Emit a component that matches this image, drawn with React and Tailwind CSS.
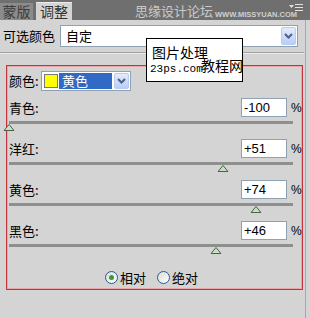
import React from 'react';

const sliders = [
    { label: '青色:', value: '-100', pct: -100 },
    { label: '洋红:', value: '+51', pct: 51 },
    { label: '黄色:', value: '+74', pct: 74 },
    { label: '黑色:', value: '+46', pct: 46 },
];

const cjk = "font-['Noto_Sans_CJK_SC','Noto_Sans',sans-serif]";

const DropButton = ({ className = '' }) => (
    <div className={`flex items-center justify-center rounded-[2px] border border-[#b9cbf3] bg-gradient-to-b from-[#e3ebfd] to-[#b9cdf7] ${className}`}>
        <svg width="9" height="6" viewBox="0 0 9 6">
            <path d="M1 1 L4.5 4.5 L8 1" fill="none" stroke="#4d6185" strokeWidth="2" />
        </svg>
    </div>
);

const Thumb = () => (
    <svg width="11" height="7" viewBox="0 0 11 7">
        <path d="M5.5 0.5 L10.5 6.5 L0.5 6.5 Z" fill="#c2e3bd" stroke="#4f5f4f" strokeWidth="1" />
    </svg>
);

const SliderBlock = ({ label, value, pct }) => (
    <div className="flex flex-col h-[41px]">
        <div className="flex items-center h-[19px]">
            <span className={`${cjk} text-[13px] text-black flex-1 leading-none`}>{label}</span>
            <div className="w-[46px] h-[19px] bg-white border border-[#8ea2b4] flex items-center pl-[2px] font-['Liberation_Sans',sans-serif] text-[13px] text-black">
                {value}
            </div>
            <span className="ml-[4px] w-[10px] font-['Liberation_Sans',sans-serif] text-[12px] text-black">%</span>
        </div>
        <div className="mt-[4px] h-[3px] bg-[#8f8f8f] mr-[8px]"></div>
        <div className="relative h-[7px] mr-[8px]">
            <div className="absolute top-0 -translate-x-1/2" style={{ left: `${50 + pct / 2}%` }}>
                <Thumb />
            </div>
        </div>
    </div>
);

const Radio = ({ checked, label }) => (
    <div className="flex items-center gap-[2px]">
        <div className="w-[13px] h-[13px] rounded-full border border-[#2f5a87] bg-gradient-to-br from-[#dcdcd4] to-white flex items-center justify-center">
            {checked && <div className="w-[5px] h-[5px] rounded-full bg-[#2fa23a]"></div>}
        </div>
        <span className={`${cjk} text-[13px] text-black leading-none`}>{label}</span>
    </div>
);

const App = () => {
    return (
        <div className="relative w-[310px] h-[318px] bg-[#d4d4d4] overflow-hidden flex flex-col">
            {/* tab bar */}
            <div className="h-[20px] bg-[#6f6f6f] flex items-end relative shrink-0 whitespace-nowrap">
                <div className={`${cjk} shrink-0 w-[33px] h-[17px] bg-[#8b8b8b] text-[#3b3b3b] text-[14px] leading-[17px] text-center`}>蒙版</div>
                <div className={`${cjk} shrink-0 ml-[3px] w-[36px] h-[18px] bg-[#d4d4d4] border-t border-[#ececec] text-[#333] text-[14px] leading-[17px] text-center`}>调整</div>
                <div className={`${cjk} shrink-0 ml-[63px] h-[20px] text-[13px] leading-[21px] text-[#c9c9c9]`}>思缘设计论坛</div>
                <div className="shrink-0 ml-[2px] mb-[1px] font-['Liberation_Sans',sans-serif] font-bold text-[7.5px] leading-[8px] text-[#cfcfcf]">WWW.MISSYUAN.COM</div>
                <div className="absolute right-[7px] top-[3px]">
                    <svg width="14" height="9" viewBox="0 0 14 9">
                        <path d="M0 2 L5 2 L2.5 5 Z" fill="#e2e2e2" />
                        <rect x="6" y="1" width="8" height="1" fill="#e2e2e2" />
                        <rect x="6" y="4" width="8" height="1" fill="#e2e2e2" />
                        <rect x="6" y="7" width="8" height="1" fill="#e2e2e2" />
                    </svg>
                </div>
            </div>

            {/* preset row */}
            <div className="flex items-center mt-[5px] h-[22px] pr-[12px]">
                <span className={`${cjk} w-[60px] pl-[3px] text-[13px] text-black`}>可选颜色</span>
                <div className="flex-1 h-[22px] bg-white border border-[#8ea2b4] flex items-center pl-[5px] pr-[1px]">
                    <span className={`${cjk} flex-1 text-[13px] text-black`}>自定</span>
                    <DropButton className="w-[15px] h-[18px]" />
                </div>
            </div>

            <div className="mt-[5px] h-px bg-[#a3a3a3] mr-[6px]"></div>
            <div className="h-px bg-[#ececec] mr-[6px]"></div>

            {/* red frame */}
            <div className="mt-[11px] ml-[6px] w-[297px] h-[225px] border border-[#c2343c]">
                <div className="h-full border border-[#eaa7a7] pt-[4px] pl-[1px] flex flex-col">
                    <div className="flex items-center h-[20px]">
                        <span className={`${cjk} w-[32px] text-[13px] text-black`}>颜色:</span>
                        <div className="w-[90px] h-[20px] border border-[#8ea2b4] bg-white flex items-center p-[1px]">
                            <div className="w-[14px] h-[14px] bg-[#ffff00] border border-[#777] mx-[1px]"></div>
                            <div className={`${cjk} flex-1 h-full bg-[#316ac5] text-white text-[13px] leading-[16px] pl-[3px]`}>黄色</div>
                            <DropButton className="ml-[2px] w-[15px] h-[16px]" />
                        </div>
                    </div>

                    <div className="mt-[7px] flex flex-col">
                        {sliders.map(s => (
                            <SliderBlock key={s.label} {...s} />
                        ))}
                    </div>

                    <div className="mt-[8px] flex items-center gap-[11px] pl-[96px] h-[14px]">
                        <Radio checked label="相对" />
                        <Radio label="绝对" />
                    </div>
                </div>
            </div>

            {/* right edge */}
            <div className="absolute top-[20px] bottom-0 right-[4px] w-px bg-[#a8a8a8]"></div>

            {/* watermark overlay */}
            <div className="absolute left-[146px] top-[38px] w-[97px] h-[44px] bg-white border border-black whitespace-nowrap">
                <div className={`${cjk} absolute left-[5px] top-[6px] text-[14px] leading-none text-black`}>图片处理</div>
                <div className="absolute left-[3px] top-[25px] font-['Liberation_Mono',monospace] text-[11px] leading-none text-black">23ps.com</div>
                <div className={`${cjk} absolute left-[54px] top-[19px] text-[14px] leading-none text-black`}>教程网</div>
            </div>
        </div>
    );
};

export default App;
